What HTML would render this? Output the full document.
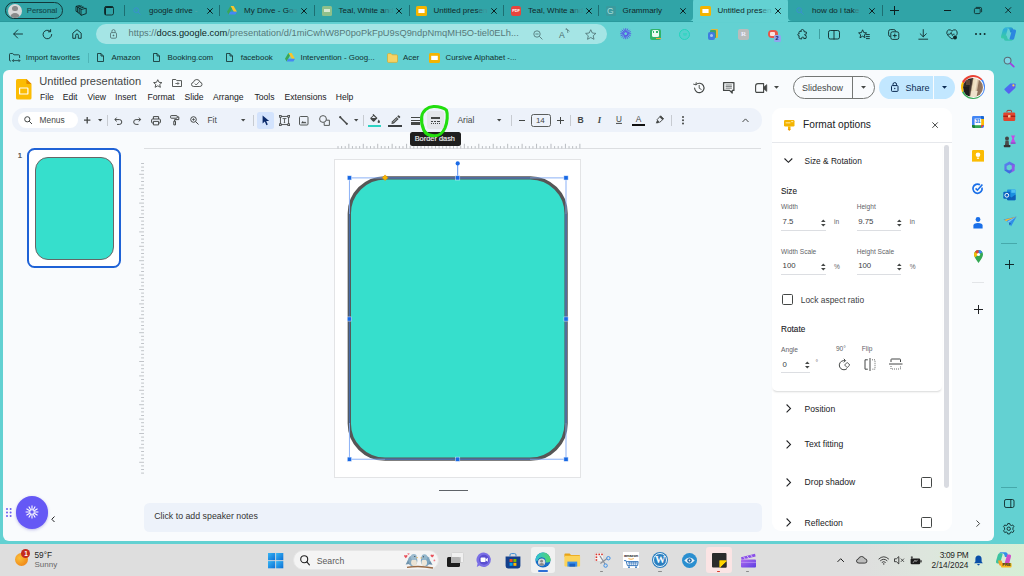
<!DOCTYPE html>
<html lang="en">
<head>
<meta charset="utf-8">
<title>Untitled presentation - Google Slides</title>
<style>
*{box-sizing:border-box;margin:0;padding:0}
html,body{width:1024px;height:576px;overflow:hidden}
body{position:relative;background:#63d1d2;font-family:"Liberation Sans",sans-serif;color:#1f1f1f;-webkit-font-smoothing:antialiased}
.a{position:absolute}
.t{position:absolute;white-space:nowrap;line-height:1;transform:translateY(-50%)}
svg{position:absolute;overflow:visible}
/* ---------- browser chrome ---------- */
#tabstrip{left:0;top:0;width:1024px;height:20.5px;background:#30a4a7;box-shadow:0 0.5px 0.5px #2a9a9d}
.tab{font-size:8px;color:#10282a}
.tx{font-size:8px;color:#0c1f20}
.tsep{width:1px;height:11px;top:5px;background:#1d6f72}
.bm{font-size:7.9px;color:#12302f}
/* ---------- slides app ---------- */
#page{left:2.8px;top:69.5px;width:991.7px;height:471.3px;background:#f9fbfd;border-radius:6px}
.menu{font-size:8.6px;color:#202124}
.gs{color:#444746}
.lbl{font-size:6.6px;color:#5f6368}
.val{font-size:7.8px;color:#3c4043}
.sec{font-size:8.6px;color:#202124}
</style>
</head>
<body>
<!-- ======= TAB STRIP ======= -->
<div id="tabstrip" class="a"></div>
<!-- TABS -->
<div class="a" style="left:5px;top:2px;width:58px;height:17px;border:1px solid #12383a;border-radius:9px"></div>
<div class="a" style="left:8px;top:3.5px;width:14px;height:14px;border-radius:7px;background:#d9d9d9;overflow:hidden"><div class="a" style="left:4.2px;top:2.4px;width:5.6px;height:5.6px;border-radius:3px;background:#8a8a8a"></div><div class="a" style="left:2px;top:9px;width:10px;height:8px;border-radius:5px 5px 0 0;background:#8a8a8a"></div></div>
<div class="t" style="left:26.8px;top:10.8px;font-size:7.7px;color:#154a4d;-webkit-text-stroke:0.15px #154a4d">Personal</div>
<svg class="a" style="left:74.5px;top:5px" width="12" height="11" viewBox="0 0 12 11" fill="none" stroke="#0c1f20" stroke-width="0.85" stroke-linejoin="round"><path d="M6 4.6L11.2 3.2V8.6L6 10.4Z"/><path d="M6 4.2L4.2 3.4M4.2 3.4L8.6 2.2L9.4 2.8M4.2 3.4V8.6L6 9.6"/><path d="M4.2 3L2.6 2.2M2.6 2.2L6.6 1L7.6 1.8M2.6 2.2V7.4L4.2 8.2"/><path d="M2.6 2L1 1.4L4.6 0.5L5.6 1M1 1.4V6.2L2.6 7"/></svg>
<svg class="a" style="left:104px;top:6px" width="10" height="9.5" viewBox="0 0 10 9.5" fill="none" stroke="#0c1f20" stroke-width="0.8"><rect x="0.5" y="0.5" width="9" height="8.5" rx="1.8"/><path d="M1.2 1.2H8.8" stroke-width="1.5"/><path d="M1.4 2V8.8" stroke-width="1.1"/></svg>
<div class="a tsep" style="left:124px"></div>
<svg class="a" style="left:132.5px;top:6.5px" width="8" height="8" viewBox="0 0 8 8"><circle cx="3.2" cy="3.2" r="2.4" stroke="#3a8fd0" stroke-width="0.9" fill="none"/><path d="M5 5L7.5 7.5" stroke="#3a8fd0" stroke-width="0.9"/></svg>
<div class="t tab" style="left:149px;top:11.1px">google drive <span style="color:#5fa9ab">-</span></div>
<svg class="a" style="left:206.5px;top:7.5px" width="6" height="6" viewBox="0 0 6 6"><path d="M0.3 0.3L5.7 5.7M5.7 0.3L0.3 5.7" stroke="#0c1f20" stroke-width="1" fill="none"/></svg>
<div class="a tsep" style="left:219px"></div>
<svg class="a" style="left:227px;top:6px" width="10" height="9" viewBox="0 0 10 9"><path d="M3.4 0H6.6L10 5.8H6.8Z" fill="#f8c52c"/><path d="M3.4 0L0 5.8L1.6 8.6L5 2.8Z" fill="#3aa757"/><path d="M3.3 5.8H10L8.4 8.6H1.6Z" fill="#4688f4"/></svg>
<div class="t tab" style="left:244px;top:11.1px">My Drive - G<span style="color:#2f6f72">o</span><span style="color:#3f9498">o</span></div>
<svg class="a" style="left:301px;top:7.5px" width="6" height="6" viewBox="0 0 6 6"><path d="M0.3 0.3L5.7 5.7M5.7 0.3L0.3 5.7" stroke="#0c1f20" stroke-width="1" fill="none"/></svg>
<div class="a tsep" style="left:314px"></div>
<div class="a" style="left:322px;top:5.5px;width:10px;height:10px;border-radius:1.5px;background:#8fc08a"></div><div class="a" style="left:324px;top:9px;width:6px;height:3px;background:#d8ead2"></div>
<div class="t tab" style="left:338.5px;top:11.1px">Teal, White a<span style="color:#2f6f72">n</span><span style="color:#3f9498">d</span></div>
<svg class="a" style="left:395.7px;top:7.5px" width="6" height="6" viewBox="0 0 6 6"><path d="M0.3 0.3L5.7 5.7M5.7 0.3L0.3 5.7" stroke="#0c1f20" stroke-width="1" fill="none"/></svg>
<div class="a tsep" style="left:409px"></div>
<svg class="a" style="left:415.7px;top:5.5px" width="11" height="10" viewBox="0 0 11 10"><rect width="11" height="10" rx="1.6" fill="#f4b400"/><rect x="2.4" y="3" width="6.2" height="4" fill="#fff"/></svg>
<div class="t tab" style="left:433.5px;top:11.1px">Untitled pres<span style="color:#2f6f72">e</span><span style="color:#3f9498">n</span></div>
<svg class="a" style="left:490.7px;top:7.5px" width="6" height="6" viewBox="0 0 6 6"><path d="M0.3 0.3L5.7 5.7M5.7 0.3L0.3 5.7" stroke="#0c1f20" stroke-width="1" fill="none"/></svg>
<div class="a tsep" style="left:503px"></div>
<div class="a" style="left:511px;top:5.5px;width:10px;height:10px;border-radius:2.5px;background:#e8453c"></div><div class="t" style="left:512.2px;top:10.8px;font-size:4px;font-weight:bold;color:#fff;letter-spacing:-0.1px">PDF</div>
<div class="t tab" style="left:528px;top:11.1px">Teal, White a<span style="color:#2f6f72">n</span><span style="color:#3f9498">d</span></div>
<svg class="a" style="left:585.7px;top:7.5px" width="6" height="6" viewBox="0 0 6 6"><path d="M0.3 0.3L5.7 5.7M5.7 0.3L0.3 5.7" stroke="#0c1f20" stroke-width="1" fill="none"/></svg>
<div class="a tsep" style="left:598px"></div>
<div class="a" style="left:605.5px;top:5.5px;width:10px;height:10px;border-radius:1.5px;background:#3a9a9d"></div><div class="t" style="left:607px;top:10.6px;font-size:8.5px;color:#a8dada">G</div>
<div class="t tab" style="left:622.5px;top:11.1px">Grammarly</div>
<svg class="a" style="left:679.5px;top:7.5px" width="6" height="6" viewBox="0 0 6 6"><path d="M0.3 0.3L5.7 5.7M5.7 0.3L0.3 5.7" stroke="#0c1f20" stroke-width="1" fill="none"/></svg>
<div class="a" style="left:693px;top:-3px;width:95px;height:25px;background:#63d1d2;border-radius:5px 5px 0 0"></div>
<svg class="a" style="left:689px;top:17px" width="4" height="4" viewBox="0 0 4 4"><path d="M4 0V4H0A4 4 0 0 0 4 0Z" fill="#63d1d2"/></svg>
<svg class="a" style="left:788px;top:17px" width="4" height="4" viewBox="0 0 4 4"><path d="M0 0V4H4A4 4 0 0 1 0 0Z" fill="#63d1d2"/></svg>
<svg class="a" style="left:700.2px;top:5.5px" width="11" height="10" viewBox="0 0 11 10"><rect width="11" height="10" rx="1.6" fill="#f4b400"/><rect x="2.4" y="3" width="6.2" height="4" fill="#fff"/></svg>
<div class="t tab" style="left:717.5px;top:11.1px">Untitled pres<span style="color:#3e8486">e</span><span style="color:#58b8ba">n</span></div>
<svg class="a" style="left:774.7px;top:7.5px" width="6" height="6" viewBox="0 0 6 6"><path d="M0.3 0.3L5.7 5.7M5.7 0.3L0.3 5.7" stroke="#0c1f20" stroke-width="1" fill="none"/></svg>
<svg class="a" style="left:796px;top:6.5px" width="8" height="8" viewBox="0 0 8 8"><circle cx="3.2" cy="3.2" r="2.4" stroke="#3a8fd0" stroke-width="0.9" fill="none"/><path d="M5 5L7.5 7.5" stroke="#3a8fd0" stroke-width="0.9"/></svg>
<div class="t tab" style="left:812px;top:11.1px">how do i tak<span style="color:#3a7e80">e</span></div>
<svg class="a" style="left:869px;top:7.5px" width="6" height="6" viewBox="0 0 6 6"><path d="M0.3 0.3L5.7 5.7M5.7 0.3L0.3 5.7" stroke="#0c1f20" stroke-width="1" fill="none"/></svg>
<div class="a tsep" style="left:882px"></div>
<svg class="a" style="left:890px;top:6px" width="9" height="9" viewBox="0 0 9 9"><path d="M4.5 0V9M0 4.5H9" stroke="#0c1f20" stroke-width="1"/></svg>
<div class="a" style="left:943.5px;top:10px;width:7px;height:1px;background:#0c1f20"></div>
<svg class="a" style="left:974px;top:7px" width="8" height="7" viewBox="0 0 8 7" fill="none" stroke="#0c1f20" stroke-width="0.8"><rect x="0.4" y="1.4" width="5.8" height="5.2" rx="1.2"/><path d="M1.8 0.4H6.2Q7.6 0.4 7.6 1.8V5.2"/></svg>
<svg class="a" style="left:1004.8px;top:7.3px" width="6.4" height="6.4" viewBox="0 0 6.4 6.4"><path d="M0.3 0.3L6.1000000000000005 6.1000000000000005M6.1000000000000005 0.3L0.3 6.1000000000000005" stroke="#0c1f20" stroke-width="0.9" fill="none"/></svg>
<!-- TOOLBAR -->
<svg class="a" style="left:13px;top:29px" width="10" height="10" viewBox="0 0 10 10" fill="none" stroke="#10292a" stroke-width="0.9" stroke-linecap="round" stroke-linejoin="round"><path d="M9.5 5H0.8M4.6 1L0.7 5L4.6 9"/></svg>
<svg class="a" style="left:42px;top:28.5px" width="11" height="11" viewBox="0 0 11 11" fill="none" stroke="#10292a" stroke-width="0.9" stroke-linecap="round"><path d="M9.7 5.5A4.3 4.3 0 1 1 8.2 2.2"/><path d="M8.6 0.6V2.8H6.4" stroke-linejoin="round"/></svg>
<svg class="a" style="left:72px;top:29px" width="10" height="10" viewBox="0 0 10 10" fill="none" stroke="#10292a" stroke-width="0.9" stroke-linejoin="round"><path d="M0.8 4.2L5 0.7L9.2 4.2V9.3H6.3V6.2Q6.3 5 5 5Q3.7 5 3.7 6.2V9.3H0.8Z"/></svg>
<div class="a" style="left:96px;top:23.5px;width:511px;height:20.5px;border-radius:10.5px;background:#a5e5e5"></div>
<svg class="a" style="left:109.5px;top:29px" width="7" height="10" viewBox="0 0 7 10" fill="none" stroke="#4d6b6c" stroke-width="0.8"><rect x="0.5" y="3.6" width="6" height="5.6" rx="1.2"/><path d="M1.9 3.6V2.2Q1.9 0.6 3.5 0.6Q5.1 0.6 5.1 2.2V3.6"/><circle cx="3.5" cy="6.4" r="0.5" fill="#4d6b6c"/></svg>
<div class="t" id="url" style="left:128.5px;top:34.2px;font-size:9.3px;color:#55797a;letter-spacing:0.02px">https://<span style="color:#0d2526">docs.google.com</span>/presentation/d/1miCwhW8P0poPkFpU9sQ9ndpNmqMH5O-tiel0ELh...</div>
<svg class="a" style="left:532.5px;top:29.5px" width="10" height="10" viewBox="0 0 10 10" fill="none" stroke="#4a6c6d" stroke-width="0.8"><circle cx="4" cy="4" r="3.2"/><path d="M6.4 6.4L9.4 9.4M2.4 4H5.6"/></svg>
<div class="t" style="left:559px;top:34.8px;font-size:8.6px;color:#4a6c6d">A</div><svg class="a" style="left:565px;top:28px" width="5" height="6" viewBox="0 0 5 6" fill="none" stroke="#4a6c6d" stroke-width="0.7"><path d="M0.5 1.2Q2 0.2 2.6 2.4Q3.4 1.6 4.4 3.4M1.4 0.4Q3.2 2.6 2.8 5"/></svg>
<svg class="a" style="left:585px;top:28.5px" width="11.5" height="11" viewBox="0 0 11.5 11" fill="none" stroke="#4a6c6d" stroke-width="0.8" stroke-linejoin="round"><path d="M5.75 0.7L7.3 4L10.9 4.4L8.2 6.8L9 10.3L5.75 8.5L2.5 10.3L3.3 6.8L0.6 4.4L4.2 4Z"/></svg>
<svg class="a" style="left:620.3px;top:28.3px" width="11.4" height="11.4" viewBox="-5.7 -5.7 11.4 11.4" stroke="#5648ea" stroke-width="0.85" fill="none"><path d="M0.00 -2.10L0.00 -5.50M0.80 -1.94L2.10 -5.08M1.48 -1.48L3.89 -3.89M1.94 -0.80L5.08 -2.10M2.10 -0.00L5.50 -0.00M1.94 0.80L5.08 2.10M1.48 1.48L3.89 3.89M0.80 1.94L2.10 5.08M0.00 2.10L0.00 5.50M-0.80 1.94L-2.10 5.08M-1.48 1.48L-3.89 3.89M-1.94 0.80L-5.08 2.10M-2.10 0.00L-5.50 0.00M-1.94 -0.80L-5.08 -2.10M-1.48 -1.48L-3.89 -3.89M-0.80 -1.94L-2.10 -5.08"/><circle r="2" stroke-width="0.9"/></svg>
<div class="a" style="left:650px;top:28.5px;width:11px;height:11px;border-radius:2px;background:#2fb36a"></div><div class="a" style="left:652px;top:30px;width:7px;height:7px;border-radius:1.5px;background:#e9fbf1"></div><div class="a" style="left:653.2px;top:31.2px;width:1.2px;height:2px;background:#2fb36a"></div><div class="a" style="left:656.4px;top:31.2px;width:1.2px;height:2px;background:#2fb36a"></div><div class="a" style="left:656px;top:37.6px;width:5px;height:1.6px;background:#f2a33a"></div>
<div class="a" style="left:679px;top:28.5px;width:11px;height:11px;border-radius:6px;border:1.7px solid #22d4bc;background:rgba(40,210,190,.25)"></div><div class="a" style="left:682.5px;top:33px;width:4px;height:3px;border-radius:0 0 3px 3px;background:#2fd6c0;opacity:.7"></div>
<div class="a" style="left:711px;top:28.5px;width:7px;height:9px;border-radius:1px;background:#e2b93b"></div><div class="a" style="left:709.5px;top:30px;width:6px;height:8px;border-radius:1px;background:#3aa36b"></div><div class="a" style="left:708px;top:31.5px;width:7px;height:8px;border-radius:2px;background:#3f7be0"></div><div class="a" style="left:710px;top:34px;width:3px;height:3px;border-radius:2px;background:#a6c4f4"></div>
<div class="a" style="left:737.5px;top:28.5px;width:11px;height:11px;border-radius:2px;background:#b9bcbc"></div><div class="t" style="left:741px;top:34.2px;font-size:7px;color:#eef;font-family:'Liberation Serif',serif;font-weight:bold">R</div>
<div class="a" style="left:767.5px;top:29.5px;width:10px;height:8px;border-radius:4px;background:#e8564a"></div><div class="a" style="left:770px;top:31.5px;width:5px;height:4px;border-radius:1px;background:#fbe3df"></div><div class="a" style="left:774px;top:35px;width:6.5px;height:7px;border-radius:1.5px;background:#8fa6ee"></div><div class="t" style="left:775.6px;top:38.7px;font-size:5.5px;font-weight:bold;color:#16205a">2</div>
<svg class="a" style="left:796.5px;top:28.5px" width="11" height="11" viewBox="0 0 11 11" fill="none" stroke="#10292a" stroke-width="0.9" stroke-linejoin="round"><path d="M4 1.2Q5.5 -0.2 6.8 1.2Q7.4 2 7 2.7L9.4 3.1Q9.6 4.6 9.2 5.2Q8 4.6 7.6 5.6Q7.6 6.6 9 6.4Q9.6 7.6 9 9.4L6.8 9.6Q7.2 8.6 6.4 8.2Q5 7.8 4.6 8.8Q4.6 9.6 4.8 10L2.4 9.6Q1.6 8 2.2 6.8Q1 7 0.8 5.6Q1 4.4 2.2 4.8Q1.6 3.6 2.4 2.4L4.4 2.4Q3.6 1.8 4 1.2Z"/></svg>
<div class="a" style="left:818.5px;top:29px;width:1px;height:10px;background:#3f9fa1"></div>
<svg class="a" style="left:828px;top:29.5px" width="12" height="9.5" viewBox="0 0 12 9.5" fill="none" stroke="#10292a" stroke-width="0.9"><rect x="0.5" y="0.5" width="11" height="8.5" rx="1.8"/><path d="M6 0V9.5"/></svg>
<svg class="a" style="left:858px;top:28.5px" width="12" height="11" viewBox="0 0 12 11" fill="none" stroke="#10292a" stroke-width="0.9" stroke-linejoin="round"><path d="M4.6 0.8L5.8 3.6L8.6 3.9L6.4 5.8L7 8.6L4.6 7.2L2 8.8L2.7 5.8L0.6 3.9L3.4 3.6Z"/><path d="M8 5.6H11.4M8.4 7.6H11.4M8.4 9.6H11.4" stroke-linecap="round"/></svg>
<svg class="a" style="left:888px;top:28.5px" width="11.5" height="11" viewBox="0 0 11.5 11" fill="none" stroke="#10292a" stroke-width="0.9"><path d="M2.4 7.6Q0.6 7.6 0.6 5.8V2.4Q0.6 0.6 2.4 0.6H5.8Q7.6 0.6 7.6 2.4"/><rect x="2.8" y="2.8" width="8" height="7.6" rx="1.8"/><path d="M6.8 4.6V8.6M4.8 6.6H8.8"/></svg>
<svg class="a" style="left:917.5px;top:28.5px" width="10.5" height="11" viewBox="0 0 10.5 11" fill="none" stroke="#10292a" stroke-width="0.9" stroke-linecap="round" stroke-linejoin="round"><path d="M5.25 0.6V7.6M2.2 4.8L5.25 7.8L8.3 4.8M0.8 10.2H9.7"/></svg>
<svg class="a" style="left:946px;top:28.5px" width="12" height="11" viewBox="0 0 12 11" fill="none" stroke="#10292a" stroke-width="0.9" stroke-linejoin="round"><path d="M6 2.2Q4.6 0.4 2.6 0.9Q0.4 1.8 0.8 4.4Q1.4 7 6 10Q7 9.4 7.6 8.8"/><path d="M6 2.2Q7.4 0.4 9.4 0.9Q11.6 1.8 11.2 4.4Q11 5.6 10.2 6.6"/><path d="M2 5.2H4.2L5.2 3.4L6.4 6.6L7.2 5.2H8.6" stroke-width="0.8"/><circle cx="9" cy="8.6" r="2" fill="#10292a" stroke="none"/></svg>
<div class="a" style="left:975.4px;top:33.2px;width:2px;height:2px;border-radius:1px;background:#10292a;box-shadow:4.3px 0 0 #10292a,8.6px 0 0 #10292a"></div>
<svg class="a" style="left:1000px;top:26px" width="17" height="16" viewBox="0 0 17 16"><defs><linearGradient id="cp1" x1="0" y1="0" x2="1" y2="1"><stop offset="0" stop-color="#37c6d0"/><stop offset="1" stop-color="#1a6fd6"/></linearGradient><linearGradient id="cp2" x1="0" y1="0" x2="0" y2="1"><stop offset="0" stop-color="#2aa9e0"/><stop offset="1" stop-color="#3ad0a0"/></linearGradient></defs><path d="M5.5 1.2H11Q12.6 1.2 13 2.8L14 6.4H10.4L9.4 3.4Q9 2.4 8 2.4H4.4Q4.6 1.2 5.5 1.2Z" fill="url(#cp1)"/><path d="M4.2 2.2Q3.2 2.6 2.8 4L1 10.2Q0.6 12.4 2.6 12.6H5L7.6 3.6Q7.8 2.4 6.6 2.2Z" fill="url(#cp2)"/><path d="M16 5.6Q16.4 3.8 14.6 3.6H12.2L9.6 12.6Q9.2 13.8 10.4 14H12.4Q13.8 13.8 14.2 12.4Z" fill="#2b86e0"/><path d="M11.4 14.8H6Q4.4 14.8 4 13.2L3 9.6H6.6L7.6 12.6Q8 13.6 9 13.6H12.6Q12.4 14.8 11.4 14.8Z" fill="#38c4b0"/></svg>
<!-- BOOKMARKS -->
<svg class="a" style="left:8.5px;top:53px" width="11.5" height="9.5" viewBox="0 0 11.5 9.5" fill="none" stroke="#10292a" stroke-width="0.8" stroke-linejoin="round"><path d="M2 8H1.4Q0.5 8 0.5 7V1.4Q0.5 0.5 1.4 0.5H3.6L5 1.8H9.6Q10.6 1.8 10.6 2.8V5"/><path d="M3.6 7.6H10.8M4.8 6.2L3.4 7.6L4.8 9M9.6 6.2L11 7.6L9.6 9" stroke-width="0.7"/></svg>
<div class="t bm" style="left:25.7px;top:58px">Import favorites</div>
<div class="a" style="left:88px;top:52.5px;width:1px;height:10px;background:#4fb5b7"></div>
<svg class="a" style="left:97.2px;top:53.0px" width="7" height="9" viewBox="0 0 7 9" fill="none" stroke="#10292a" stroke-width="0.8" stroke-linejoin="round"><path d="M0.5 0.5H4L6.5 3V8.5H0.5Z"/><path d="M4 0.5V3H6.5"/></svg>
<div class="t bm" style="left:111.5px;top:58px">Amazon</div>
<svg class="a" style="left:153.2px;top:53.0px" width="7" height="9" viewBox="0 0 7 9" fill="none" stroke="#10292a" stroke-width="0.8" stroke-linejoin="round"><path d="M0.5 0.5H4L6.5 3V8.5H0.5Z"/><path d="M4 0.5V3H6.5"/></svg>
<div class="t bm" style="left:167.5px;top:58px">Booking.com</div>
<svg class="a" style="left:226.0px;top:53.0px" width="7" height="9" viewBox="0 0 7 9" fill="none" stroke="#10292a" stroke-width="0.8" stroke-linejoin="round"><path d="M0.5 0.5H4L6.5 3V8.5H0.5Z"/><path d="M4 0.5V3H6.5"/></svg>
<div class="t bm" style="left:240.7px;top:58px">facebook</div>
<svg class="a" style="left:284.5px;top:53px" width="10" height="9" viewBox="0 0 10 9"><path d="M3.4 0H6.6L10 5.8H6.8Z" fill="#f8c52c"/><path d="M3.4 0L0 5.8L1.6 8.6L5 2.8Z" fill="#3aa757"/><path d="M3.3 5.8H10L8.4 8.6H1.6Z" fill="#4688f4"/></svg>
<div class="t bm" style="left:300.5px;top:58px">Intervention - Goog...</div>
<svg class="a" style="left:386.5px;top:52.5px" width="11" height="10" viewBox="0 0 11 10"><path d="M0.5 1.6Q0.5 0.6 1.5 0.6H4L5.2 1.8H9.6Q10.5 1.8 10.5 2.8V8.4Q10.5 9.4 9.5 9.4H1.5Q0.5 9.4 0.5 8.4Z" fill="#f6d365" stroke="#d9a520" stroke-width="0.6"/></svg>
<div class="t bm" style="left:403px;top:58px">Acer</div>
<svg class="a" style="left:429px;top:52.5px" width="11" height="10" viewBox="0 0 11 10"><rect width="11" height="10" rx="1.6" fill="#f4b400"/><rect x="2.2" y="2.8" width="6.6" height="4.2" fill="#fff"/></svg>
<div class="t bm" style="left:445.5px;top:58px">Cursive Alphabet -...</div>
<!-- EDGE SIDEBAR -->
<svg class="a" style="left:1003px;top:55.5px" width="12" height="12" viewBox="0 0 12 12"><circle cx="4.6" cy="4.6" r="3.4" fill="#7fd6e6" stroke="#596a72" stroke-width="1.1"/><path d="M7.4 7.4L10.8 10.6" stroke="#a23de0" stroke-width="1.7" stroke-linecap="round"/></svg>
<svg class="a" style="left:1003.5px;top:83px" width="12" height="11" viewBox="0 0 12 11"><defs><linearGradient id="tg" x1="0" y1="0" x2="1" y2="1"><stop offset="0" stop-color="#3b7df0"/><stop offset="1" stop-color="#6a4df0"/></linearGradient></defs><path d="M6.4 0.6L10.8 0.4Q11.6 0.4 11.6 1.2L11.4 4.8L5.4 10.6Q4.8 11 4.2 10.6L0.6 7Q0.2 6.4 0.6 5.8Z" fill="url(#tg)"/><circle cx="9.4" cy="2.4" r="1.1" fill="#f7d24a"/></svg>
<svg class="a" style="left:1003px;top:109.5px" width="12.5" height="11.5" viewBox="0 0 12.5 11.5"><path d="M4 2.4V1.2Q4 0.4 4.8 0.4H7.7Q8.5 0.4 8.5 1.2V2.4" fill="none" stroke="#b02318" stroke-width="0.9"/><rect x="0.3" y="2.4" width="11.9" height="8.6" rx="1.2" fill="#e0442e"/><rect x="0.3" y="5.6" width="11.9" height="1.4" fill="#a82014"/><rect x="5" y="5" width="2.5" height="2.6" rx="0.5" fill="#f6c9a0"/></svg>
<svg class="a" style="left:1003px;top:135px" width="13" height="13" viewBox="0 0 13 13"><circle cx="4" cy="3.6" r="2" fill="#444"/><path d="M2.4 5.4H5.6L6 10H2Z" fill="#4a4a4a"/><rect x="0.8" y="10" width="6.6" height="2.2" rx="0.6" fill="#333"/><path d="M8 0.6H12.2L10.8 3.4L12.4 7.6H7.8L9.4 3.4Z" fill="#c44be8"/><rect x="7.6" y="7.4" width="5" height="1.4" fill="#a035c8"/></svg>
<svg class="a" style="left:1003px;top:161px" width="13" height="13" viewBox="0 0 13 13"><defs><linearGradient id="m3a" x1="0" y1="0" x2="1" y2="1"><stop offset="0" stop-color="#4a90f0"/><stop offset="1" stop-color="#7a48e0"/></linearGradient></defs><path d="M6.5 0.4L11.6 3.2V6L6.5 3.4L3.6 5V8.2L1.4 9.6V3.2Z" fill="url(#m3a)"/><path d="M11.6 3.4V9.8L6.5 12.6L3.4 10.8L8.8 8V4.6Z" fill="#8e5be8"/><path d="M1.4 9.6L3.6 8.2L6.5 9.8L8.8 8.4V10.4L6.5 12.6Z" fill="#3a6fe0"/></svg>
<svg class="a" style="left:1003px;top:188.5px" width="13" height="12" viewBox="0 0 13 12"><rect x="4" y="0.6" width="8.6" height="10.6" rx="1" fill="#1a8fe0"/><path d="M4 5.5L8.3 8.4L12.6 5.5V10.2Q12.6 11.2 11.6 11.2H5Q4 11.2 4 10.2Z" fill="#0f5fb8"/><rect x="8.3" y="0.6" width="4.3" height="3.2" fill="#4fc0f4"/><rect x="0.3" y="2.8" width="7" height="7" rx="1" fill="#0a63c0"/><circle cx="3.8" cy="6.3" r="1.9" fill="none" stroke="#fff" stroke-width="1"/></svg>
<svg class="a" style="left:1002.5px;top:215.5px" width="14" height="11" viewBox="0 0 14 11"><path d="M0.4 3.6L13.6 0.4L8 10.4L6 6.4Z" fill="#2f8fe8"/><path d="M6 6.4L13.6 0.4L4.4 5.4Z" fill="#7cc4f8"/><path d="M1.4 3.8L13.6 0.4L3 5.2Z" fill="#f0b83a"/><path d="M6 6.4L6.4 9.6L8 7.4Z" fill="#1a5fb8"/></svg>
<div class="a" style="left:1001px;top:243px;width:16px;height:1px;background:#46a9ab"></div>
<svg class="a" style="left:1004.7px;top:259.5px" width="9" height="9" viewBox="0 0 9 9"><path d="M4.5 0V9M0 4.5H9" stroke="#10292a" stroke-width="1"/></svg>
<div class="a" style="left:1001px;top:487px;width:16px;height:1px;background:#46a9ab"></div>
<svg class="a" style="left:1003.5px;top:498.5px" width="10.5" height="9" viewBox="0 0 10.5 9" fill="none" stroke="#10292a" stroke-width="0.9"><rect x="0.5" y="0.5" width="9.5" height="8" rx="1.6"/><path d="M6.8 0.5V8.5"/></svg>
<svg class="a" style="left:1003px;top:522.5px" width="11.5" height="11.5" viewBox="-5.75 -5.75 11.5 11.5" fill="none" stroke="#10292a" stroke-width="0.9" stroke-linejoin="round"><path d="M-1 -5.2H1L1.4 -3.8L2.6 -3.2L4 -3.8L5.2 -2L4.2 -1L4.2 1L5.2 2L4 3.8L2.6 3.2L1.4 3.8L1 5.2H-1L-1.4 3.8L-2.6 3.2L-4 3.8L-5.2 2L-4.2 1V-1L-5.2 -2L-4 -3.8L-2.6 -3.2L-1.4 -3.8Z"/><circle r="1.7"/></svg>
<!-- ======= PAGE ======= -->
<div id="page" class="a"></div>
<!-- HEADER -->
<svg class="a" style="left:15.5px;top:79px" width="15.5" height="20.5" viewBox="0 0 15.5 20.5"><path d="M1.6 0H10.4L15.5 5.1V18.9Q15.5 20.5 13.9 20.5H1.6Q0 20.5 0 18.9V1.6Q0 0 1.6 0Z" fill="#fbbc04"/><path d="M10.4 0L15.5 5.1H11.6Q10.4 5.1 10.4 3.9Z" fill="#e08600"/><rect x="3.6" y="9" width="8.3" height="6" rx="0.6" fill="none" stroke="#fff" stroke-width="1.2"/></svg>
<div class="t" id="title" style="left:39.3px;top:82.3px;font-size:11.1px;color:#444746">Untitled presentation</div>
<svg class="a" style="left:153px;top:78.5px" width="9.5" height="9" viewBox="0 0 9.5 9" fill="none" stroke="#444746" stroke-width="0.9" stroke-linejoin="round"><path d="M4.75 0.7L6 3.3L8.9 3.6L6.7 5.5L7.4 8.3L4.75 6.8L2.1 8.3L2.8 5.5L0.6 3.6L3.5 3.3Z"/></svg>
<svg class="a" style="left:172px;top:79px" width="10" height="8" viewBox="0 0 10 8" fill="none" stroke="#444746" stroke-width="0.9" stroke-linejoin="round"><path d="M0.5 0.5H3.8L4.8 1.6H9.5V7.5H0.5Z"/><path d="M3.4 4.5H6.8M5.6 3.2L6.9 4.5L5.6 5.8" stroke-width="0.8"/></svg>
<svg class="a" style="left:190.5px;top:79px" width="11.5" height="8" viewBox="0 0 11.5 8" fill="none" stroke="#444746" stroke-width="0.9" stroke-linejoin="round"><path d="M2.8 7.5Q0.5 7.5 0.5 5.4Q0.5 3.6 2.4 3.3Q3 0.5 5.8 0.5Q8.4 0.5 9 3.1Q11 3.4 11 5.4Q11 7.5 8.8 7.5Z"/><path d="M3.8 4.6L5.2 6L7.8 3.2" stroke-width="0.8"/></svg>
<div class="t menu" style="left:40px;top:97.2px">File</div>
<div class="t menu" style="left:62.7px;top:97.2px">Edit</div>
<div class="t menu" style="left:87.5px;top:97.2px">View</div>
<div class="t menu" style="left:115px;top:97.2px">Insert</div>
<div class="t menu" style="left:147.5px;top:97.2px">Format</div>
<div class="t menu" style="left:184.5px;top:97.2px">Slide</div>
<div class="t menu" style="left:213px;top:97.2px">Arrange</div>
<div class="t menu" style="left:254.5px;top:97.2px">Tools</div>
<div class="t menu" style="left:284.5px;top:97.2px">Extensions</div>
<div class="t menu" style="left:335.7px;top:97.2px">Help</div>
<svg class="a" style="left:692.5px;top:81.5px" width="12" height="12" viewBox="0 0 12 12" fill="none" stroke="#444746" stroke-width="1.1" stroke-linecap="round" stroke-linejoin="round"><path d="M1.6 6A4.7 4.7 0 1 0 3 2.6"/><path d="M0.6 2.2L2.8 2.8L3.2 0.6" stroke-width="0.9"/><path d="M6.2 3.4V6.2L8.2 7.4" stroke-width="0.9"/></svg>
<svg class="a" style="left:723px;top:82px" width="11.5" height="11.5" viewBox="0 0 11.5 11.5" fill="none" stroke="#444746" stroke-width="1.3" stroke-linejoin="round"><path d="M0.6 0.6H10.9V8.4H9.2V11L6.6 8.4H0.6Z"/><path d="M2.6 3H8.9M2.6 4.6H8.9M2.6 6.2H8.9" stroke-width="0.7"/></svg>
<svg class="a" style="left:754.5px;top:82.5px" width="12.5" height="10" viewBox="0 0 12.5 10" fill="none" stroke="#444746" stroke-width="1.1" stroke-linejoin="round"><path d="M3 0.6H8.6V9.4H2Q0.6 9.4 0.6 8V3Q0.6 0.6 3 0.6Z"/><path d="M8.8 4L11.8 1.6V8.4L8.8 6Z" fill="#444746" stroke-width="0.6"/></svg>
<svg class="a" style="left:773.6px;top:86.2px" width="5" height="3" viewBox="0 0 5 3"><path d="M0 0H5L2.5 2.8Z" fill="#444746"/></svg>
<div class="a" style="left:792.5px;top:75.5px;width:82px;height:23.8px;border:1px solid #747775;border-radius:12px"></div><div class="a" style="left:852.3px;top:76px;width:1px;height:23px;background:#747775"></div>
<div class="t" id="ss" style="left:802px;top:87.5px;font-size:9px;color:#444746">Slideshow</div>
<svg class="a" style="left:861px;top:86.2px" width="5" height="3" viewBox="0 0 5 3"><path d="M0 0H5L2.5 2.8Z" fill="#444746"/></svg>
<div class="a" style="left:879.4px;top:75.5px;width:54px;height:23.8px;background:#c2e7ff;border-radius:12px 0 0 12px"></div><div class="a" style="left:934px;top:75.5px;width:20.5px;height:23.8px;background:#c2e7ff;border-radius:0 12px 12px 0"></div>
<svg class="a" style="left:891px;top:82px" width="7.5" height="10" viewBox="0 0 7.5 10" fill="none" stroke="#0b2a52" stroke-width="1"><rect x="0.5" y="3.6" width="6.5" height="5.8" rx="0.8"/><path d="M2 3.6V2.2Q2 0.6 3.75 0.6Q5.5 0.6 5.5 2.2V3.6"/><circle cx="3.75" cy="6.5" r="0.7" fill="#0b2a52" stroke="none"/></svg>
<div class="t" id="sh" style="left:905.6px;top:87.5px;font-size:9px;color:#0b2a52">Share</div>
<svg class="a" style="left:941.5px;top:86.2px" width="5" height="3" viewBox="0 0 5 3"><path d="M0 0H5L2.5 2.8Z" fill="#0b2a52"/></svg>
<div class="a" style="left:960.8px;top:74.9px;width:24.4px;height:24.4px;border-radius:12.2px;background:conic-gradient(#ea4335 0 50deg,#4285f4 50deg 140deg,#34a853 140deg 245deg,#fbbc04 245deg 295deg,#ea4335 295deg)"></div><div class="a" style="left:962.5px;top:76.6px;width:21px;height:21px;border-radius:10.5px;background:#fdfdfe"></div><div class="a" style="left:963.4px;top:77.5px;width:19.2px;height:19.2px;border-radius:9.6px;overflow:hidden;background:linear-gradient(100deg,#3a302c 0,#252122 30%,#4a3a32 41%,#ead9b8 47%,#f3e6cc 60%,#cdb69a 68%,#8d7059 72%,#9a7d66 100%)"><div class="a" style="left:3px;top:2px;width:4px;height:5px;background:#6a4e3c;opacity:.8"></div><div class="a" style="left:8px;top:13px;width:6px;height:7px;background:#efe2cc;transform:skewX(-12deg)"></div><div class="a" style="left:1px;top:9px;width:5px;height:9px;background:#1f1c1e"></div></div>
<!-- TOOLBAR2 -->
<div class="a" style="left:12px;top:108.1px;width:749.5px;height:23.7px;border-radius:11.8px;background:#edf2fa"></div>
<div class="a" style="left:17.5px;top:111.7px;width:60.5px;height:16.8px;border-radius:8.4px;background:#fff"></div>
<svg class="a" style="left:24px;top:116px" width="8.5" height="8.5" viewBox="0 0 8.5 8.5" fill="none" stroke="#444746" stroke-width="1"><circle cx="3.3" cy="3.3" r="2.6"/><path d="M5.2 5.2L8 8"/></svg>
<div class="t" id="menus" style="left:39.5px;top:120.2px;font-size:8.4px;color:#444746">Menus</div>
<svg class="a" style="left:84px;top:117px" width="6.4" height="6.4" viewBox="0 0 6.4 6.4"><path d="M3.2 0V6.4M0 3.2H6.4" stroke="#444746" stroke-width="1.3"/></svg>
<svg class="a" style="left:97.8px;top:119.0px" width="4.4" height="2.6" viewBox="0 0 4.4 2.6"><path d="M0 0H4.4L2.2 2.5Z" fill="#444746"/></svg>
<div class="a" style="left:106.5px;top:114.5px;width:1px;height:11px;background:#c7cbd1"></div>
<svg class="a" style="left:114px;top:116.5px" width="8.5" height="8" viewBox="0 0 8.5 8" fill="none" stroke="#444746" stroke-width="1" stroke-linejoin="round"><path d="M2.6 0.6L0.8 2.6L2.8 4.4M1 2.6H5.4Q7.8 2.6 7.8 5Q7.8 7.4 5.4 7.4H3"/></svg>
<svg class="a" style="left:132.5px;top:116.5px" width="8.5" height="8" viewBox="0 0 8.5 8" fill="none" stroke="#444746" stroke-width="1" stroke-linejoin="round"><path d="M5.9 0.6L7.7 2.6L5.7 4.4M7.5 2.6H3.1Q0.7 2.6 0.7 5Q0.7 7.4 3.1 7.4H5.5"/></svg>
<svg class="a" style="left:151px;top:115.5px" width="10" height="9.5" viewBox="0 0 10 9.5" fill="none" stroke="#444746" stroke-width="1" stroke-linejoin="round"><path d="M2.4 3V0.6H7.6V3"/><path d="M2.4 7H1.4Q0.6 7 0.6 6.2V4Q0.6 3 1.6 3H8.4Q9.4 3 9.4 4V6.2Q9.4 7 8.6 7H7.6"/><rect x="2.4" y="5.4" width="5.2" height="3.5"/></svg>
<svg class="a" style="left:170px;top:115px" width="9.5" height="10.5" viewBox="0 0 9.5 10.5" fill="none" stroke="#444746" stroke-width="1" stroke-linejoin="round"><rect x="0.6" y="0.6" width="6.6" height="2.6" rx="0.6"/><path d="M7.2 1.9H8.8V4.6H4.6V6.2"/><rect x="3.8" y="6.2" width="1.7" height="3.7"/></svg>
<svg class="a" style="left:189.5px;top:115.7px" width="9" height="9" viewBox="0 0 9 9" fill="none" stroke="#444746" stroke-width="1"><circle cx="3.5" cy="3.5" r="2.8"/><path d="M5.6 5.6L8.5 8.5"/><path d="M3.5 2.2V4.8M2.2 3.5H4.8" stroke-width="0.8"/></svg>
<div class="t" style="left:207.5px;top:120.2px;font-size:8.4px;color:#444746">Fit</div>
<svg class="a" style="left:241.20000000000002px;top:119.0px" width="4.4" height="2.6" viewBox="0 0 4.4 2.6"><path d="M0 0H4.4L2.2 2.5Z" fill="#444746"/></svg>
<div class="a" style="left:253px;top:114.5px;width:1px;height:11px;background:#c7cbd1"></div>
<div class="a" style="left:256.7px;top:111.5px;width:17px;height:17px;border-radius:2.5px;background:#d3e3fd"></div>
<svg class="a" style="left:261.5px;top:115px" width="8" height="10.5" viewBox="0 0 8 10.5"><path d="M0.6 0.4V8.6L2.8 6.6L4.4 10.2L5.8 9.6L4.2 6.1H7.2Z" fill="#0b2a6b"/></svg>
<svg class="a" style="left:279px;top:114.7px" width="11" height="11" viewBox="0 0 11 11" fill="none" stroke="#444746" stroke-width="0.9"><rect x="1.4" y="1.4" width="8.2" height="8.2"/><g fill="#444746" stroke="none"><rect x="0" y="0" width="2.6" height="2.6"/><rect x="8.4" y="0" width="2.6" height="2.6"/><rect x="0" y="8.4" width="2.6" height="2.6"/><rect x="8.4" y="8.4" width="2.6" height="2.6"/></g><g fill="#edf2fa" stroke="none"><rect x="0.8" y="0.8" width="1" height="1"/><rect x="9.2" y="0.8" width="1" height="1"/><rect x="0.8" y="9.2" width="1" height="1"/><rect x="9.2" y="9.2" width="1" height="1"/></g><path d="M3.8 4V3.6H7.2V4M5.5 3.6V7.6M4.8 7.6H6.2" stroke-width="0.8"/></svg>
<svg class="a" style="left:299px;top:115.7px" width="9.5" height="9.5" viewBox="0 0 9.5 9.5" fill="none" stroke="#444746" stroke-width="0.9"><rect x="0.5" y="0.5" width="8.5" height="8.5" rx="1"/><path d="M2 7.2L3.8 5L5 6.4L6 5.4L7.6 7.2Z" fill="#444746" stroke="none"/></svg>
<svg class="a" style="left:318.5px;top:115px" width="11" height="11" viewBox="0 0 11 11" fill="none" stroke="#444746" stroke-width="0.9"><circle cx="4" cy="4" r="3.4"/><path d="M7.2 5.2H10.4V10.4H5.2V7.4"/></svg>
<svg class="a" style="left:339px;top:116px" width="9" height="9" viewBox="0 0 9 9"><path d="M1 1L8 8" stroke="#444746" stroke-width="1.4"/><circle cx="1.2" cy="1.2" r="1.1" fill="#444746"/><circle cx="7.8" cy="7.8" r="1.1" fill="#444746"/></svg>
<svg class="a" style="left:354.0px;top:119.0px" width="4.4" height="2.6" viewBox="0 0 4.4 2.6"><path d="M0 0H4.4L2.2 2.5Z" fill="#444746"/></svg>
<div class="a" style="left:362.5px;top:114.5px;width:1px;height:11px;background:#c7cbd1"></div>
<svg class="a" style="left:370px;top:114.3px" width="10.5" height="9.5" viewBox="0 0 10.5 9.5"><path d="M2.6 0.6L3.4 0L7.2 3.8Q7.5 4.2 7.2 4.6L4.2 7.6Q3.6 8 3 7.6L0.5 5Q0.1 4.4 0.5 3.8L3 1.4Z" fill="#444746"/><path d="M1.6 3.9L3.7 1.9L5.8 3.9Z" fill="#edf2fa"/><path d="M8.8 5.6Q10 7.2 10 7.9Q10 8.9 8.8 8.9Q7.6 8.9 7.6 7.9Q7.6 7.2 8.8 5.6Z" fill="#444746"/></svg>
<div class="a" style="left:368px;top:125.2px;width:13.4px;height:1.8px;background:#2fd3c3"></div>
<svg class="a" style="left:390.5px;top:114.6px" width="9.5" height="9.5" viewBox="0 0 9.5 9.5"><path d="M0.5 9L0.9 6.6L5.6 1.9L7.6 3.9L2.9 8.6Z" fill="#444746"/><path d="M6.2 1.3L7.1 0.4Q7.5 0.1 7.9 0.4L9.1 1.6Q9.4 2 9.1 2.4L8.2 3.3Z" fill="#444746"/><path d="M2 7.4L6 3.4" stroke="#edf2fa" stroke-width="0.7"/></svg>
<div class="a" style="left:388px;top:125.2px;width:13.7px;height:1.8px;background:#3c4043"></div>
<div class="a" style="left:411px;top:117.2px;width:8.6px;height:1px;background:#444746"></div><div class="a" style="left:411px;top:119.6px;width:8.6px;height:1.6px;background:#444746"></div><div class="a" style="left:411px;top:122.4px;width:8.6px;height:2.2px;background:#444746"></div>
<div class="a" style="left:427px;top:110.5px;width:17px;height:18.5px;border-radius:2.5px;background:#e3e6ea"></div>
<div class="a" style="left:431px;top:117.3px;width:8.6px;height:1.8px;background:#444746"></div><div class="a" style="left:431px;top:120.6px;width:8.6px;height:1.2px;background:repeating-linear-gradient(90deg,#444746 0 2.3px,transparent 2.3px 3.15px)"></div><div class="a" style="left:431px;top:123.4px;width:8.6px;height:1.1px;background:repeating-linear-gradient(90deg,#444746 0 1px,transparent 1px 1.9px)"></div>
<div class="t" style="left:457.5px;top:120px;font-size:8.4px;color:#444746">Arial</div>
<svg class="a" style="left:497.40000000000003px;top:119.0px" width="4.4" height="2.6" viewBox="0 0 4.4 2.6"><path d="M0 0H4.4L2.2 2.5Z" fill="#444746"/></svg>
<div class="a" style="left:511px;top:114.5px;width:1px;height:11px;background:#c7cbd1"></div>
<div class="a" style="left:518.6px;top:119.8px;width:6.4px;height:1px;background:#444746"></div>
<div class="a" style="left:530.5px;top:113.5px;width:20.5px;height:13.8px;border:0.9px solid #5a5d5c;border-radius:2.5px"></div><div class="t" style="left:535.9px;top:120.9px;font-size:8px;color:#444746">14</div>
<svg class="a" style="left:557px;top:116.7px" width="7" height="7" viewBox="0 0 7 7"><path d="M3.5 0V7M0 3.5H7" stroke="#444746" stroke-width="1"/></svg>
<div class="a" style="left:569.6px;top:114.5px;width:1px;height:11px;background:#c7cbd1"></div>
<div class="t" style="left:577.6px;top:120.4px;font-size:8.6px;font-weight:bold;color:#444746">B</div>
<div class="t" style="left:597.8px;top:120.4px;font-size:8.6px;font-style:italic;font-weight:bold;color:#444746;font-family:'Liberation Serif',serif">I</div>
<div class="t" style="left:616px;top:120px;font-size:8.2px;color:#444746;text-decoration:underline;text-underline-offset:1.2px">U</div>
<div class="t" style="left:635.8px;top:119.2px;font-size:8.4px;color:#444746">A</div><div class="a" style="left:632px;top:124px;width:13px;height:1.8px;background:#111"></div>
<svg class="a" style="left:654.5px;top:114.5px" width="9.5" height="9.5" viewBox="0 0 9.5 9.5"><path d="M5.6 0.8L8.6 3.8L4.6 7.4L2 4.8Z" fill="none" stroke="#444746" stroke-width="0.9" stroke-linejoin="round"/><path d="M2.2 5L4.4 7.2L3 8.2H0.8Z" fill="#444746"/><path d="M5.6 0.8L8.6 3.8L7.4 4.9L4.5 2Z" fill="#444746"/></svg>
<div class="a" style="left:671.3px;top:114.5px;width:1px;height:11px;background:#c7cbd1"></div>
<div class="a" style="left:682.2px;top:116.2px;width:1.7px;height:1.7px;border-radius:1px;background:#444746;box-shadow:0 3.2px 0 #444746,0 6.4px 0 #444746"></div>
<svg class="a" style="left:741.5px;top:118px" width="7" height="4.5" viewBox="0 0 7 4.5" fill="none" stroke="#444746" stroke-width="1"><path d="M0.5 4L3.5 0.9L6.5 4"/></svg>

<div class="a" style="z-index:5;left:409.7px;top:132px;width:51.5px;height:14px;border-radius:2.5px;background:#1f1f1f"></div><div class="t" id="tip" style="z-index:6;left:414.7px;top:139.4px;font-size:7.4px;color:#f1f3f4;-webkit-text-stroke:0.15px #f1f3f4">Border dash</div>
<svg class="a" style="z-index:7;left:0;top:0" width="1024" height="576" viewBox="0 0 1024 576" fill="none"><path d="M433.5 106.5C438.5 106.2 444.8 108 446.4 110.2C448 114 447.4 122 445 128C442.8 133 438.8 135.8 434.4 135.8C429.4 135.8 425.4 133.6 423.8 130C422 126 421.2 121 421.7 116.8C422.4 111 427.4 107 433.5 106.5Z" stroke="#22de0e" stroke-width="3.1" stroke-linejoin="round"/></svg>
<!-- FILMSTRIP -->
<div class="t" style="left:17.8px;top:156.2px;font-size:7.8px;color:#3c4043;-webkit-text-stroke:0.2px #3c4043">1</div>
<div class="a" style="left:26.9px;top:147.8px;width:94px;height:120.6px;border:2px solid #1f62d6;border-radius:7.5px;background:#fff"></div>
<div class="a" style="left:34.8px;top:157px;width:79.3px;height:102.8px;border:1.3px solid #666;border-radius:13px;background:#36dfcc"></div>
<!-- CANVAS -->
<div class="a" style="left:143.5px;top:148px;width:617.5px;height:1px;background:#dcdee1"></div>
<svg class="a" style="left:0;top:0" width="1024" height="576" viewBox="0 0 1024 576" fill="none"><path d="M338.00 148.4V146.1M341.61 148.4V146.1M345.22 148.4V146.1M348.83 148.4V143.8M352.44 148.4V146.1M356.05 148.4V146.1M359.66 148.4V146.1M363.27 148.4V143.8M366.88 148.4V146.1M370.49 148.4V146.1M374.10 148.4V146.1M377.71 148.4V143.8M381.32 148.4V146.1M384.93 148.4V146.1M388.54 148.4V146.1M392.15 148.4V143.8M395.76 148.4V146.1M399.37 148.4V146.1M402.98 148.4V146.1M406.59 148.4V143.8M410.20 148.4V146.1M413.81 148.4V146.1M417.42 148.4V146.1M421.03 148.4V143.8M424.64 148.4V146.1M428.25 148.4V146.1M431.86 148.4V146.1M435.47 148.4V143.8M439.08 148.4V146.1M442.69 148.4V146.1M446.30 148.4V146.1M449.91 148.4V143.8M453.52 148.4V146.1M457.13 148.4V146.1M460.74 148.4V146.1M464.35 148.4V143.8M467.96 148.4V146.1M471.57 148.4V146.1M475.18 148.4V146.1M478.79 148.4V143.8M482.40 148.4V146.1M486.01 148.4V146.1M489.62 148.4V146.1M493.23 148.4V143.8M496.84 148.4V146.1M500.45 148.4V146.1M504.06 148.4V146.1M507.67 148.4V143.8M511.28 148.4V146.1M514.89 148.4V146.1M518.50 148.4V146.1M522.11 148.4V143.8M525.72 148.4V146.1M529.33 148.4V146.1M532.94 148.4V146.1M536.55 148.4V143.8M540.16 148.4V146.1M543.77 148.4V146.1M547.38 148.4V146.1M550.99 148.4V143.8M554.60 148.4V146.1M558.21 148.4V146.1M561.82 148.4V146.1M565.43 148.4V143.8M569.04 148.4V146.1M572.65 148.4V146.1M576.26 148.4V146.1M579.87 148.4V143.8" stroke="#a4a8ad" stroke-width="0.75"/><path d="M144 163.50H141.1M144 167.10H141.1M144 170.70H141.1M144 174.30H139.2M144 177.90H141.1M144 181.50H141.1M144 185.10H141.1M144 188.70H139.2M144 192.30H141.1M144 195.90H141.1M144 199.50H141.1M144 203.10H139.2M144 206.70H141.1M144 210.30H141.1M144 213.90H141.1M144 217.50H139.2M144 221.10H141.1M144 224.70H141.1M144 228.30H141.1M144 231.90H139.2M144 235.50H141.1M144 239.10H141.1M144 242.70H141.1M144 246.30H139.2M144 249.90H141.1M144 253.50H141.1M144 257.10H141.1M144 260.70H139.2M144 264.30H141.1M144 267.90H141.1M144 271.50H141.1M144 275.10H139.2M144 278.70H141.1M144 282.30H141.1M144 285.90H141.1M144 289.50H139.2M144 293.10H141.1M144 296.70H141.1M144 300.30H141.1M144 303.90H139.2M144 307.50H141.1M144 311.10H141.1M144 314.70H141.1M144 318.30H139.2M144 321.90H141.1M144 325.50H141.1M144 329.10H141.1M144 332.70H139.2M144 336.30H141.1M144 339.90H141.1M144 343.50H141.1M144 347.10H139.2M144 350.70H141.1M144 354.30H141.1M144 357.90H141.1M144 361.50H139.2M144 365.10H141.1M144 368.70H141.1M144 372.30H141.1M144 375.90H139.2M144 379.50H141.1M144 383.10H141.1M144 386.70H141.1M144 390.30H139.2M144 393.90H141.1M144 397.50H141.1M144 401.10H141.1M144 404.70H139.2M144 408.30H141.1M144 411.90H141.1M144 415.50H141.1M144 419.10H139.2M144 422.70H141.1M144 426.30H141.1M144 429.90H141.1M144 433.50H139.2M144 437.10H141.1M144 440.70H141.1M144 444.30H141.1M144 447.90H139.2M144 451.50H141.1M144 455.10H141.1M144 458.70H141.1M144 462.30H139.2M144 465.90H141.1M144 469.50H141.1M144 473.10H141.1" stroke="#aeb2b7" stroke-width="0.75"/></svg>
<div class="a" style="left:334.3px;top:159.2px;width:247.2px;height:319.3px;background:#fff;border:1px solid #e3e4e6"></div>
<svg class="a" style="left:0;top:0" width="1024" height="576" viewBox="0 0 1024 576" fill="none">
<rect x="349.3" y="177.8" width="216.8" height="281.4" rx="35.8" ry="35.8" fill="#36dfcc" stroke="#565656" stroke-width="3.3"/>
<rect x="349.4" y="177.9" width="216.6" height="281.3" stroke="#7fa9f5" stroke-width="0.9"/>
<path d="M385 177.9H530" stroke="#3a5c98" stroke-width="0.9"/><path d="M385 459.2H530" stroke="#3a5c98" stroke-width="0.9"/><path d="M349.4 214V423" stroke="#3a5c98" stroke-width="0.9"/><path d="M566 214V423" stroke="#3a5c98" stroke-width="0.9"/>
<path d="M457.7 163.5V177" stroke="#4a86ee" stroke-width="0.9"/>
<circle cx="457.7" cy="163.4" r="2.1" fill="#1a6ae6"/>
<g fill="#1768e4" stroke="#dfeafc" stroke-width="0.5">
<rect x="347.3" y="175.8" width="4.2" height="4.2"/><rect x="455.6" y="175.8" width="4.2" height="4.2"/><rect x="563.9" y="175.8" width="4.2" height="4.2"/>
<rect x="347.3" y="316.9" width="4.2" height="4.2"/><rect x="563.9" y="316.9" width="4.2" height="4.2"/>
<rect x="347.3" y="457.1" width="4.2" height="4.2"/><rect x="455.6" y="457.1" width="4.2" height="4.2"/><rect x="563.9" y="457.1" width="4.2" height="4.2"/>
</g>
<path d="M385.1 174.9L387.9 177.7L385.1 180.5L382.3 177.7Z" fill="#f8b800" stroke="#e58e00" stroke-width="0.6"/>
</svg>
<!-- NOTES -->
<div class="a" style="left:439px;top:489.6px;width:28.5px;height:1.1px;background:#5f6368"></div>
<div class="a" style="left:144px;top:503px;width:617.5px;height:29px;border-radius:5.5px;background:#edf2fa"></div>
<div class="t" id="notes" style="left:154.2px;top:515.7px;font-size:8.8px;color:#333">Click to add speaker notes</div>
<div class="a" style="left:15.6px;top:495.8px;width:32.8px;height:32.8px;border-radius:17px;background:#6558f5;box-shadow:0 1px 3px rgba(80,70,200,.35)"></div>
<svg class="a" style="left:25px;top:505.2px" width="14" height="14" viewBox="-7 -7 14 14" stroke="#fff" stroke-width="1.1" fill="none"><path d="M0.00 -2.60L0.00 -6.40M1.30 -2.25L3.20 -5.54M2.25 -1.30L5.54 -3.20M2.60 -0.00L6.40 -0.00M2.25 1.30L5.54 3.20M1.30 2.25L3.20 5.54M0.00 2.60L0.00 6.40M-1.30 2.25L-3.20 5.54M-2.25 1.30L-5.54 3.20M-2.60 0.00L-6.40 0.00M-2.25 -1.30L-5.54 -3.20M-1.30 -2.25L-3.20 -5.54"/><circle r="2.3" stroke-width="1"/></svg>
<div class="a" style="left:5.8px;top:507.8px;width:1.9px;height:1.9px;border-radius:1px;background:#6a5ff0;box-shadow:3.6px 0 0 #6a5ff0,0 3.5px 0 #6a5ff0,3.6px 3.5px 0 #6a5ff0,0 7px 0 #6a5ff0,3.6px 7px 0 #6a5ff0"></div>
<svg class="a" style="left:50.5px;top:515.5px" width="4" height="6.5" viewBox="0 0 4 6.5" fill="none" stroke="#202124" stroke-width="1"><path d="M3.5 0.5L0.8 3.25L3.5 6"/></svg>
<!-- PANEL -->
<div class="a" style="left:771.7px;top:108.1px;width:180px;height:422.6px;border-radius:9px;background:#fff"></div>
<div class="a" style="left:771.7px;top:142px;width:180px;height:1px;background:#e6e8ec"></div>
<div class="a" style="left:771.7px;top:143px;width:170.3px;height:247.8px;border-radius:0 0 5px 5px;background:#fff;box-shadow:0 2px 2px -1.2px rgba(60,64,67,.2)"></div>
<div class="a" style="left:944.2px;top:145.2px;width:4.8px;height:342.6px;border-radius:2.4px;background:#d9dbe1"></div>
<svg class="a" style="left:783.5px;top:120px" width="10.5" height="11" viewBox="0 0 10.5 11"><rect x="0" y="0" width="10.5" height="6.4" rx="1.2" fill="#f4b400"/><path d="M1.6 2.2H6.4V3.4H1.6Z" fill="#fde293"/><path d="M7.2 1H9.2V2.2H7.2Z" fill="#fde293"/><rect x="4" y="6.4" width="2.5" height="3.2" fill="#f4b400"/><path d="M3.6 9H6.9L5.25 11Z" fill="#f29900"/></svg>
<div class="t" id="fo" style="left:803px;top:124.7px;font-size:10.2px;color:#202124">Format options</div>
<svg class="a" style="left:931.8px;top:122.2px" width="6.2" height="6.2" viewBox="0 0 6.2 6.2"><path d="M0.4 0.4L5.8 5.8M5.8 0.4L0.4 5.8" stroke="#444746" stroke-width="1"/></svg>
<svg class="a" style="left:784.2px;top:158.4px" width="8.8" height="5" viewBox="0 0 8.8 5" fill="none" stroke="#202124" stroke-width="1.1"><path d="M0.5 0.5L4.4 4.3L8.3 0.5"/></svg>
<div class="t sec" id="sr" style="left:804.6px;top:160.8px;font-size:8.3px">Size &amp; Rotation</div>
<div class="t" style="left:781.1px;top:191.7px;font-size:8.2px;color:#202124;-webkit-text-stroke:0.1px #202124">Size</div>
<div class="t lbl" style="left:781.1px;top:207.4px">Width</div><div class="t val" style="left:782.6px;top:221.8px">7.5</div><svg class="a" style="left:821.2px;top:218.8px" width="4.6" height="8" viewBox="0 0 4.6 8" fill="#444746"><path d="M0 3L2.3 0.4L4.6 3Z"/><path d="M0 5L2.3 7.6L4.6 5Z"/></svg><div class="t lbl" style="left:834.1px;top:222.4px">in</div><div class="a" style="left:781.1px;top:230px;width:44.6px;height:1px;background:#dcdee2"></div>
<div class="t lbl" style="left:856.7px;top:207.4px">Height</div><div class="t val" style="left:858.2px;top:221.8px">9.75</div><svg class="a" style="left:896.8000000000001px;top:218.8px" width="4.6" height="8" viewBox="0 0 4.6 8" fill="#444746"><path d="M0 3L2.3 0.4L4.6 3Z"/><path d="M0 5L2.3 7.6L4.6 5Z"/></svg><div class="t lbl" style="left:909.7px;top:222.4px">in</div><div class="a" style="left:856.7px;top:230px;width:44.6px;height:1px;background:#dcdee2"></div>
<div class="t lbl" style="left:781.1px;top:251.8px">Width Scale</div><div class="t val" style="left:782.6px;top:266.3px">100</div><svg class="a" style="left:821.2px;top:263.3px" width="4.6" height="8" viewBox="0 0 4.6 8" fill="#444746"><path d="M0 3L2.3 0.4L4.6 3Z"/><path d="M0 5L2.3 7.6L4.6 5Z"/></svg><div class="t lbl" style="left:834.1px;top:266.90000000000003px">%</div><div class="a" style="left:781.1px;top:274px;width:44.6px;height:1px;background:#dcdee2"></div>
<div class="t lbl" style="left:856.7px;top:251.8px">Height Scale</div><div class="t val" style="left:858.2px;top:266.3px">100</div><svg class="a" style="left:896.8000000000001px;top:263.3px" width="4.6" height="8" viewBox="0 0 4.6 8" fill="#444746"><path d="M0 3L2.3 0.4L4.6 3Z"/><path d="M0 5L2.3 7.6L4.6 5Z"/></svg><div class="t lbl" style="left:909.7px;top:266.90000000000003px">%</div><div class="a" style="left:856.7px;top:274px;width:44.6px;height:1px;background:#dcdee2"></div>
<div class="a" style="left:782px;top:294.2px;width:10.6px;height:10.6px;border:1.1px solid #444746;border-radius:1.6px;background:#fff"></div>
<div class="t" id="lar" style="left:800.8px;top:299.9px;font-size:8.4px;color:#3c4043">Lock aspect ratio</div>
<div class="t" style="left:781.1px;top:329.7px;font-size:8.2px;color:#202124;-webkit-text-stroke:0.1px #202124">Rotate</div>
<div class="t lbl" style="left:781.1px;top:349.6px">Angle</div><div class="t lbl" style="left:835.9px;top:349.2px">90°</div><div class="t lbl" style="left:861.7px;top:349.2px">Flip</div>
<div class="t val" style="left:782.6px;top:364.6px">0</div><svg class="a" style="left:804.7px;top:361.3px" width="4.6" height="8" viewBox="0 0 4.6 8" fill="#444746"><path d="M0 3L2.3 0.4L4.6 3Z"/><path d="M0 5L2.3 7.6L4.6 5Z"/></svg><div class="t lbl" style="left:815.4px;top:363.4px">°</div><div class="a" style="left:781.1px;top:372px;width:28.5px;height:1px;background:#dcdee2"></div>
<svg class="a" style="left:837.5px;top:357.5px" width="13" height="13" viewBox="0 0 13 13" fill="none" stroke="#444746" stroke-width="1"><path d="M9 10.6A4.6 4.6 0 1 1 5.6 2.6H7"/><path d="M5.8 0.8L7.6 2.6L5.8 4.4" stroke-linejoin="round"/><path d="M9.2 4.4L11.8 7L9.2 9.6L6.6 7Z" stroke-width="0.9"/></svg>
<svg class="a" style="left:863.5px;top:357.5px" width="12" height="13" viewBox="0 0 12 13" fill="none" stroke="#444746" stroke-width="1"><path d="M6 0V13"/><path d="M3.8 1.8H1V11.2H3.8"/><path d="M8 1.8H11V11.2H8" stroke-width="0.8" stroke-dasharray="1 1"/></svg>
<svg class="a" style="left:888.5px;top:358px" width="13.5" height="12" viewBox="0 0 13.5 12" fill="none" stroke="#444746" stroke-width="1"><path d="M0 6H13.5"/><path d="M2 4V1.6Q2 1 2.6 1H10.9Q11.5 1 11.5 1.6V4"/><path d="M2 8V11H11.5V8" stroke-width="0.8" stroke-dasharray="1 1"/></svg>
<svg class="a" style="left:786.4px;top:404.1px" width="5.2" height="8.8" viewBox="0 0 5.2 8.8" fill="none" stroke="#202124" stroke-width="1.1"><path d="M0.6 0.5L4.5 4.4L0.6 8.3"/></svg>
<div class="t sec" style="left:804.6px;top:408.5px">Position</div>
<svg class="a" style="left:786.4px;top:439.50000000000006px" width="5.2" height="8.8" viewBox="0 0 5.2 8.8" fill="none" stroke="#202124" stroke-width="1.1"><path d="M0.6 0.5L4.5 4.4L0.6 8.3"/></svg>
<div class="t sec" style="left:804.6px;top:443.8px">Text fitting</div>
<svg class="a" style="left:786.4px;top:477.6px" width="5.2" height="8.8" viewBox="0 0 5.2 8.8" fill="none" stroke="#202124" stroke-width="1.1"><path d="M0.6 0.5L4.5 4.4L0.6 8.3"/></svg>
<div class="t sec" style="left:804.6px;top:481.9px">Drop shadow</div>
<svg class="a" style="left:786.4px;top:518.3000000000001px" width="5.2" height="8.8" viewBox="0 0 5.2 8.8" fill="none" stroke="#202124" stroke-width="1.1"><path d="M0.6 0.5L4.5 4.4L0.6 8.3"/></svg>
<div class="t sec" style="left:804.6px;top:522.6px">Reflection</div>
<div class="a" style="left:921.1px;top:477px;width:10.6px;height:10.6px;border:1.1px solid #444746;border-radius:1.6px;background:#fff"></div>
<div class="a" style="left:921.1px;top:517.3px;width:10.6px;height:10.6px;border:1.1px solid #444746;border-radius:1.6px;background:#fff"></div>
<!-- GSIDE -->
<svg class="a" style="left:972px;top:116px" width="12" height="12" viewBox="0 0 12 12"><rect x="0" y="0" width="12" height="12" rx="1.4" fill="#4285f4"/><path d="M9 0H10.6Q12 0 12 1.4V3H9Z" fill="#1967d2"/><path d="M0 9H3V12H1.4Q0 12 0 10.6Z" fill="#188038"/><rect x="3" y="9" width="6" height="3" fill="#34a853"/><rect x="9" y="3" width="3" height="6" fill="#fbbc04"/><path d="M9 9H12L9 12Z" fill="#ea4335"/><rect x="2.6" y="2.6" width="6.6" height="6.6" fill="#fff"/></svg><div class="t" style="left:975.2px;top:122.1px;font-size:5.2px;font-weight:bold;color:#1a73e8;letter-spacing:-0.2px">31</div>
<svg class="a" style="left:972px;top:149.5px" width="12" height="12" viewBox="0 0 12 12"><path d="M1.2 0H10.8Q12 0 12 1.2V12L11 11.2L10 12L9 11.2L8 12L7 11.2L6 12L5 11.2L4 12L3 11.2L2 12L1 11.2L0 12V1.2Q0 0 1.2 0Z" fill="#fbbc04"/><circle cx="6" cy="4.8" r="2.3" fill="#fff"/><rect x="4.9" y="7.6" width="2.2" height="1.2" fill="#fff"/></svg>
<svg class="a" style="left:972.3px;top:183.3px" width="11.5" height="11.5" viewBox="0 0 11.5 11.5" fill="none"><path d="M10 4.6A4.6 4.6 0 1 1 8 1.8" stroke="#1a6fe8" stroke-width="1.7"/><path d="M3.6 5.4L5.4 7.2L10.4 1.4" stroke="#1a6fe8" stroke-width="1.6"/><circle cx="9.4" cy="8.8" r="0.1" fill="#1a6fe8"/></svg>
<svg class="a" style="left:973px;top:216.5px" width="10" height="11.5" viewBox="0 0 10 11.5"><circle cx="5" cy="2.5" r="2.4" fill="#1a6fe8"/><path d="M0.4 11.4V8.6Q0.4 6 5 6Q9.6 6 9.6 8.6V11.4Z" fill="#1a6fe8"/></svg>
<svg class="a" style="left:973.6px;top:249.5px" width="9" height="13" viewBox="0 0 9 13"><path d="M4.5 0A4.5 4.5 0 0 1 9 4.5Q9 7 4.5 13Q0 7 0 4.5A4.5 4.5 0 0 1 4.5 0Z" fill="#34a853"/><path d="M4.5 0A4.5 4.5 0 0 1 8.4 2.2L4.5 4.5Z" fill="#4285f4"/><path d="M4.5 0A4.5 4.5 0 0 0 0.8 2L4.5 4.5Z" fill="#ea4335"/><path d="M0.8 2Q0 3.2 0 4.5Q0 5.6 1 7.4L4.5 4.5Z" fill="#fbbc04"/><circle cx="4.5" cy="4.5" r="1.6" fill="#fff"/></svg>
<div class="a" style="left:972px;top:281.8px;width:12px;height:1px;background:#e3e5e8"></div>
<svg class="a" style="left:973.5px;top:305px" width="9" height="9" viewBox="0 0 9 9"><path d="M4.5 0V9M0 4.5H9" stroke="#202124" stroke-width="1"/></svg>
<svg class="a" style="left:975.8px;top:520.4px" width="4.2" height="7.2" viewBox="0 0 4.2 7.2" fill="none" stroke="#444746" stroke-width="1"><path d="M0.5 0.5L3.6 3.6L0.5 6.7"/></svg>
<!-- TASKBAR -->
<div class="a" style="left:0;top:543.5px;width:1024px;height:32.5px;background:linear-gradient(90deg,#dedede 0,#dedede 860px,#dde6dd 930px,#d6efd6 1024px)"></div>
<div class="a" style="left:14.6px;top:553.4px;width:13px;height:13px;border-radius:6.5px;background:radial-gradient(circle at 35% 40%,#fbbf3a,#f2921e 60%,#ee7f1a)"></div><div class="a" style="left:21.2px;top:549px;width:9px;height:9px;border-radius:5px;background:#c42b1c"></div><div class="t" style="left:24.2px;top:553.7px;font-size:6.4px;font-weight:bold;color:#fff">1</div>
<div class="t" style="left:34.5px;top:555.4px;font-size:8.3px;color:#1f1f1f">59°F</div><div class="t" style="left:34.5px;top:565.3px;font-size:8px;color:#666">Sunny</div>
<svg class="a" style="left:267.7px;top:552.7px" width="15.3" height="15.3" viewBox="0 0 15.3 15.3"><defs><linearGradient id="wl" x1="0" y1="0" x2="1" y2="1"><stop offset="0" stop-color="#38b6f4"/><stop offset="1" stop-color="#0a6fd6"/></linearGradient></defs><g fill="url(#wl)"><rect x="0" y="0" width="7.2" height="7.2"/><rect x="8.1" y="0" width="7.2" height="7.2"/><rect x="0" y="8.1" width="7.2" height="7.2"/><rect x="8.1" y="8.1" width="7.2" height="7.2"/></g></svg>
<div class="a" style="left:293px;top:550.2px;width:145.5px;height:20.2px;border-radius:10.1px;background:#f4f4f4;border:0.5px solid #e6e6e6"></div>
<svg class="a" style="left:300px;top:555.2px" width="10" height="10.5" viewBox="0 0 10 10.5" fill="none" stroke="#202020" stroke-width="1.1"><circle cx="4.2" cy="4.2" r="3.5"/><path d="M6.8 6.9L9.4 9.9" stroke-linecap="round"/></svg>
<div class="t" id="srch" style="left:316.7px;top:560.6px;font-size:8.7px;color:#5a5a5a">Search</div>
<svg class="a" style="left:402.5px;top:551.5px" width="33" height="18" viewBox="0 0 33 18"><path d="M4 15.4Q16 13.2 30 16" stroke="#9a6a44" stroke-width="1.4" fill="none"/><ellipse cx="9.6" cy="8.8" rx="4.8" ry="5.4" fill="#86a9c0"/><ellipse cx="11" cy="10.6" rx="2.9" ry="3.4" fill="#ebe3d4"/><circle cx="10.8" cy="5" r="3" fill="#9abace"/><circle cx="11.8" cy="4.6" r="0.5" fill="#222"/><path d="M13.6 5L15.2 5.7L13.6 6.4Z" fill="#e0a030"/><path d="M5 8L2.6 12.6L6.6 12Z" fill="#6f93ac"/><ellipse cx="22.4" cy="9" rx="4.6" ry="5.2" fill="#7ba3be"/><ellipse cx="21.2" cy="10.8" rx="2.8" ry="3.3" fill="#eee6d8"/><circle cx="21.4" cy="5.2" r="2.9" fill="#93b6cb"/><circle cx="20.4" cy="4.8" r="0.5" fill="#222"/><path d="M18.6 5.2L17 5.9L18.6 6.6Z" fill="#e0a030"/><path d="M27 8.4L29.6 12.8L25.6 12.2Z" fill="#668ba6"/><path d="M1 3.6Q2 2.4 2.8 3.6Q3.6 2.4 4.6 3.6Q4.6 5 2.8 6.2Q1 5 1 3.6Z" fill="#e8505a"/><path d="M4.4 1.4Q5 0.7 5.5 1.4Q6 0.7 6.6 1.4Q6.6 2.3 5.5 3Q4.4 2.3 4.4 1.4Z" fill="#ee7a84"/><path d="M27.4 3Q28.4 1.8 29.2 3Q30 1.8 31 3Q31 4.4 29.2 5.6Q27.4 4.4 27.4 3Z" fill="#e8505a"/><circle cx="31.4" cy="8.4" r="0.9" fill="#ee7a84"/></svg>
<div class="a" style="left:451px;top:551.8px;width:12.5px;height:10.8px;border-radius:1.5px;background:#f0f0f0;border:0.5px solid #d4d4d4"></div><div class="a" style="left:446.9px;top:556.6px;width:13.6px;height:10.6px;border-radius:1.5px;background:#1c1c1c"></div><div class="a" style="left:451px;top:556.6px;width:9.5px;height:6px;background:#c4c4c4;opacity:.9"></div>
<svg class="a" style="left:476px;top:552px" width="16" height="16" viewBox="0 0 16 16"><path d="M8 0.6A7.2 7.2 0 1 1 3.4 13.6L0.8 15L1.6 11.6A7.2 7.2 0 0 1 8 0.6Z" fill="#7b6fe6"/><circle cx="8" cy="7.8" r="5" fill="#5a4fd0"/><rect x="4.6" y="5.6" width="5" height="4.4" rx="0.9" fill="#fff"/><path d="M9.8 7.2L11.8 5.8V9.8L9.8 8.4Z" fill="#fff"/></svg>
<svg class="a" style="left:505.3px;top:553px" width="16" height="16" viewBox="0 0 16 16"><path d="M5 3.4V2Q5 0.6 6.4 0.6H9.6Q11 0.6 11 2V3.4" fill="none" stroke="#3d8fd8" stroke-width="1"/><path d="M0.6 3.4H15.4V13Q15.4 15.4 13 15.4H3Q0.6 15.4 0.6 13Z" fill="#123f8c"/><rect x="4.6" y="6" width="3" height="3" fill="#f25022"/><rect x="8.4" y="6" width="3" height="3" fill="#7fba00"/><rect x="4.6" y="9.8" width="3" height="3" fill="#00a4ef"/><rect x="8.4" y="9.8" width="3" height="3" fill="#ffb900"/></svg>
<div class="a" style="left:530.5px;top:547.2px;width:24.5px;height:26px;border-radius:3px;background:#f1f1f1"></div>
<svg class="a" style="left:534.5px;top:551.5px" width="16" height="16" viewBox="0 0 16 16"><defs><linearGradient id="ed1" x1="0" y1="0" x2="1" y2="0"><stop offset="0" stop-color="#2fc0d8"/><stop offset="1" stop-color="#54d66a"/></linearGradient></defs><circle cx="8" cy="8" r="7.6" fill="#1a6fc8"/><path d="M0.5 7A7.6 7.6 0 0 1 15.6 7.6Q15.6 10.4 12.6 10.6Q10 10.6 10.6 8.4Q10.4 5.4 7.4 5.4Q3.4 5.6 2.4 9.4Q0.6 8.6 0.5 7Z" fill="url(#ed1)"/><path d="M2.4 9.4Q3.4 5.6 7.4 5.4Q5.4 6.6 5.4 9.4Q5.6 13.4 9.8 14.4Q12 14.4 13.6 13A7.6 7.6 0 0 1 2.4 9.4Z" fill="#0f4f9c"/><circle cx="6.6" cy="10.2" r="3.6" fill="#dcdcdc"/><circle cx="6.6" cy="9.2" r="1.4" fill="#8a8a8a"/><path d="M4 12.6Q4.2 10.9 6.6 10.9Q9 10.9 9.2 12.6Q8 13.8 6.6 13.8Q5.2 13.8 4 12.6Z" fill="#8a8a8a"/></svg>
<div class="a" style="left:538px;top:570.3px;width:9.8px;height:1.7px;border-radius:1px;background:#2c6fd6"></div>
<svg class="a" style="left:564px;top:553px" width="16.5" height="14" viewBox="0 0 16.5 14"><path d="M0.4 1.4Q0.4 0.4 1.4 0.4H5.6L7 2H15Q16 2 16 3V4H0.4Z" fill="#e8a317"/><rect x="0.4" y="2.8" width="15.7" height="10.8" rx="1" fill="#fcd35a"/><path d="M3.4 8.6H13.2V13.6H3.4Z" fill="#3a8fe8"/><path d="M5.4 10.6H11.2V13.6H5.4Z" fill="#1a5fc0"/></svg>
<svg class="a" style="left:593.5px;top:552px" width="16.5" height="16" viewBox="0 0 16.5 16"><rect x="0.6" y="0.6" width="9" height="9" rx="0.8" fill="#f4f4f4" stroke="#c8c8c8" stroke-width="0.5"/><g fill="#d9342b"><rect x="1.6" y="1.6" width="1.6" height="1.6"/><rect x="4.4" y="1.6" width="1.6" height="1.6"/><rect x="7.2" y="1.6" width="1.6" height="1.6"/><rect x="1.6" y="4.4" width="1.6" height="1.6"/><rect x="1.6" y="7.2" width="1.6" height="1.6"/></g><path d="M6 4L11 12M13 6.6L6.4 11.4" stroke="#8a8f98" stroke-width="1.2"/><circle cx="11.6" cy="13.6" r="1.7" fill="none" stroke="#3a8fe8" stroke-width="1"/><circle cx="14.4" cy="6.2" r="1.7" fill="none" stroke="#3a8fe8" stroke-width="1"/></svg>
<div class="a" style="left:599.5px;top:570.5px;width:3.4px;height:1.5px;border-radius:1px;background:#8a8a8a"></div>
<div class="a" style="left:623px;top:552px;width:16px;height:16px;background:#fff"></div><div class="t" style="left:624px;top:555.8px;font-size:4px;font-weight:bold;color:#222;letter-spacing:-0.15px">amazon</div><svg class="a" style="left:623px;top:557.5px" width="16" height="10.5" viewBox="0 0 16 10.5"><path d="M5.4 0.6Q8 2 10.8 0.6" stroke="#f29a1c" stroke-width="0.8" fill="none"/><path d="M1 2.6H3L4.4 7.6H14.6L15.2 3.6H3.4" stroke="#2b6fb8" stroke-width="0.9" fill="none"/><path d="M5 4.4H14.6M5 5.8H14.6M6.4 3.6V7.6M8.4 3.6V7.6M10.4 3.6V7.6M12.4 3.6V7.6" stroke="#2b6fb8" stroke-width="0.5"/><circle cx="6" cy="9.2" r="0.9" fill="#2b6fb8"/><circle cx="13" cy="9.2" r="0.9" fill="#2b6fb8"/></svg>
<div class="a" style="left:652px;top:552px;width:16px;height:16px;border-radius:8px;background:#2a7fc0"></div><div class="a" style="left:653.2px;top:553.2px;width:13.6px;height:13.6px;border-radius:7px;border:0.8px solid #e8f2fa"></div><div class="t" style="left:655px;top:560.4px;font-size:10.5px;font-weight:bold;color:#f4f9fd;font-family:'Liberation Serif',serif">W</div>
<div class="a" style="left:658.2px;top:570.5px;width:3.4px;height:1.5px;border-radius:1px;background:#8a8a8a"></div>
<div class="a" style="left:681.5px;top:552.5px;width:15px;height:15px;border-radius:7.5px;background:#2a8fd0"></div><svg class="a" style="left:683.5px;top:556.5px" width="11" height="7" viewBox="0 0 11 7"><path d="M0.3 3.5Q5.5 -2.4 10.7 3.5Q5.5 9.4 0.3 3.5Z" fill="#e6f2fa"/><circle cx="5.5" cy="3.5" r="2.2" fill="#1a5f9c"/><circle cx="5.5" cy="3.5" r="0.9" fill="#e6f2fa"/></svg>
<div class="a" style="left:705.8px;top:547.2px;width:26px;height:26px;border-radius:3px;background:#fbe4e4"></div>
<svg class="a" style="left:711.5px;top:553px" width="14.5" height="14.5" viewBox="0 0 14.5 14.5"><rect width="14.5" height="14.5" rx="1" fill="#2b2b2b"/><path d="M7.6 7.6H14.5V8.4L8.4 14.5H7.6Z" fill="#ffd400"/><path d="M14.5 8.4V14.5H8.4Z" fill="#2b2b2b"/><path d="M7.6 7.6H14.5L7.6 14.5Z" fill="#ffd400"/></svg>
<div class="a" style="left:716.8px;top:570.5px;width:3.6px;height:1.5px;border-radius:1px;background:#d83b2a"></div>
<svg class="a" style="left:739.5px;top:552.5px" width="16.5" height="15" viewBox="0 0 16.5 15"><defs><linearGradient id="cl" x1="0" y1="0" x2="1" y2="1"><stop offset="0" stop-color="#b06af0"/><stop offset="1" stop-color="#5a3fe0"/></linearGradient></defs><path d="M1 4.2L15 0.8L15.6 3.4L1.6 6.8Z" fill="#8a4fe8"/><path d="M3.4 3.6L5.2 6M7 2.8L8.8 5.2M10.6 1.8L12.4 4.2" stroke="#d8c0fa" stroke-width="1"/><rect x="1" y="6.4" width="15" height="8.2" rx="1" fill="url(#cl)"/><path d="M1 9.4H16" stroke="#c8a8f8" stroke-width="0.6"/></svg>
<div class="a" style="left:746px;top:570.5px;width:3.4px;height:1.5px;border-radius:1px;background:#8a8a8a"></div>
<svg class="a" style="left:837px;top:557.8px" width="7.4" height="4.4" viewBox="0 0 7.4 4.4" fill="none" stroke="#1c1c1c" stroke-width="1"><path d="M0.5 3.9L3.7 0.7L6.9 3.9"/></svg>
<svg class="a" style="left:856px;top:556.2px" width="11.5" height="7.6" viewBox="0 0 11.5 7.6" fill="#bdbdbd" stroke="#1c1c1c" stroke-width="0.8"><path d="M3 7.1Q0.5 7.1 0.5 5Q0.5 3.2 2.4 3Q3 0.5 5.6 0.5Q8 0.5 8.6 2.6Q11 2.8 11 5Q11 7.1 8.8 7.1Z"/></svg>
<svg class="a" style="left:877.5px;top:555.5px" width="11.5" height="9" viewBox="0 0 11.5 9" fill="none" stroke="#1c1c1c" stroke-width="0.8"><path d="M0.6 3.2Q5.75 -1.6 10.9 3.2"/><path d="M2.2 4.9Q5.75 1.7 9.3 4.9"/><path d="M3.8 6.5Q5.75 4.9 7.7 6.5"/><circle cx="5.75" cy="7.9" r="0.7" fill="#1c1c1c" stroke="none"/></svg>
<svg class="a" style="left:893.5px;top:556px" width="11" height="8.5" viewBox="0 0 11 8.5" fill="none" stroke="#1c1c1c" stroke-width="0.8" stroke-linejoin="round"><path d="M0.5 2.8H2.4L4.8 0.6V7.9L2.4 5.7H0.5Z"/><path d="M6.8 2.6L10 5.9M10 2.6L6.8 5.9" stroke-width="0.7"/></svg>
<svg class="a" style="left:909.5px;top:555.5px" width="12" height="9" viewBox="0 0 12 9"><rect x="0.6" y="2.4" width="9.6" height="5.8" rx="1.2" fill="#1c1c1c"/><rect x="10.4" y="4.2" width="1.2" height="2.2" fill="#1c1c1c"/><path d="M1.8 0.4V3M0.8 1.2H3" stroke="#1c1c1c" stroke-width="0.7"/><path d="M3 6.8L5 4.2L6 5.6L7.6 3.8" stroke="#ddd" stroke-width="0.7" fill="none"/></svg>
<div class="t" id="tm" style="right:55.5px;top:554.6px;font-size:8.3px;letter-spacing:-0.3px;color:#1f1f1f">3:09 PM</div><div class="t" id="dt" style="right:55.5px;top:565.2px;font-size:8.3px;color:#1f1f1f">2/14/2024</div>
<svg class="a" style="left:974.2px;top:555px" width="9" height="11" viewBox="0 0 9 11"><path d="M4.5 0.4Q7.6 0.6 7.6 4V6.4L8.8 8.2H0.2L1.4 6.4V4Q1.4 0.6 4.5 0.4Z" fill="#0a4fa8"/><path d="M3.2 9H5.8Q5.6 10.4 4.5 10.4Q3.4 10.4 3.2 9Z" fill="#0a4fa8"/></svg>
<svg class="a" style="left:994.5px;top:551px" width="17" height="17" viewBox="0 0 17 17"><path d="M5.5 1.2H10.6Q12.2 1.2 12.6 2.8L13.4 6H10L9.2 3.4Q8.8 2.4 7.8 2.4H4.4Q4.6 1.2 5.5 1.2Z" fill="#2f8fe8"/><path d="M4.2 2.2Q3.2 2.6 2.8 4L1 10.2Q0.6 12.4 2.6 12.6H5L7.6 3.6Q7.8 2.4 6.6 2.2Z" fill="#3cc4a0"/><path d="M16 5.6Q16.4 3.8 14.6 3.6H12.2L9.6 12.6Q9.2 13.8 10.4 14H12.4Q13.8 13.8 14.2 12.4Z" fill="#d050c8"/><path d="M11.4 14.8H6Q4.4 14.8 4 13.2L3 9.6H6.6L7.6 12.6Q8 13.6 9 13.6H12.6Q12.4 14.8 11.4 14.8Z" fill="#f4a428"/><rect x="6" y="12" width="10.6" height="4.6" rx="1" fill="#f8b820"/></svg><div class="t" style="left:1002.3px;top:565.4px;font-size:4.2px;font-weight:bold;color:#222">PRE</div>
</body>
</html>
